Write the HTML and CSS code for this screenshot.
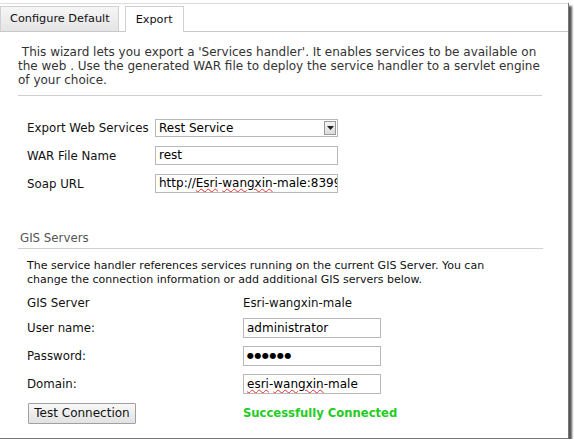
FILE: index.html
```html
<!DOCTYPE html>
<html>
<head>
<meta charset="utf-8">
<link rel="stylesheet" href="styles.css">
</head>
<body>
<div class="frame">
  <div class="tabs">
    <div class="tab">Configure Default</div>
    <div class="tab active">Export</div>
  </div>
  <p class="intro">&nbsp;This wizard lets you export a 'Services handler'. It enables services to be available on<br>the web . Use the generated WAR file to deploy the service handler to a servlet engine<br>of your choice.</p>
  <div class="form">
    <label class="lbl">Export Web Services</label>
    <div class="select"><span>Rest Service</span><span class="arrow"><svg width="7" height="4" viewBox="0 0 7 4"><path d="M0 0H7L3.5 4Z" fill="#222"/></svg></span></div>
    <label class="lbl">WAR File Name</label>
    <div class="input">rest</div>
    <label class="lbl">Soap URL</label>
    <div class="input">http://<span class="sp">Esri</span>-<span class="sp">wangxin</span>-male:8399</div>
  </div>
  <div class="heading">GIS Servers</div>
  <p class="desc">The service handler references services running on the current GIS Server. You can change the connection information or add additional GIS servers below.</p>
  <div class="gis">
    <div class="lbl">GIS Server</div>
    <div class="val">Esri-wangxin-male</div>
    <div class="lbl">User name:</div>
    <div class="input">administrator</div>
    <div class="lbl">Password:</div>
    <div class="input dots">&#9679;&#9679;&#9679;&#9679;&#9679;&#9679;</div>
    <div class="lbl">Domain:</div>
    <div class="input"><span class="sp">esri</span>-<span class="sp">wangxin</span>-male</div>
    <div class="btncell"><button class="btn">Test Connection</button></div>
    <div class="ok">Successfully Connected</div>
  </div>
</div>
</body>
</html>
```
FILE: styles.css
```css
html, body {
  margin: 0;
  padding: 0;
  background: #fff;
}
body {
  font-family: "DejaVu Sans", Verdana, sans-serif;
  font-size: 11.8px;
  color: #111;
}
.frame {
  width: 569px;
  height: 436px;
  margin-top: 3px;
  background: #fff;
  border-right: 1px solid #777;
  border-bottom: 1px solid #777;
  box-shadow: 3px 3px 2px #555;
  box-sizing: border-box;
  overflow: hidden;
}
.tabs {
  display: flex;
  align-items: flex-end;
  border-top: 1px solid #ddd;
  border-bottom: 1px solid #c8c8c8;
  height: 26px;
  padding-top: 1px;
}
.tab {
  height: 24px;
  line-height: 24px;
  padding: 0 8px 0 9px;
  border: 1px solid #d0d0d0;
  border-bottom: none;
  background: linear-gradient(#f6f6f6, #e4e4e4);
  color: #111;
  font-size: 11.3px;
  box-sizing: content-box;
}
.tab.active {
  background: #fff;
  margin-left: 6px;
  height: 25px;
  margin-bottom: -1px;
  padding: 0 10px;
  line-height: 25px;
}
.intro {
  margin: 13px 26px 0 18px;
  padding-bottom: 8px;
  border-bottom: 1px solid #d0d0d0;
  line-height: 14px;
  color: #333;
  font-size: 12px;
  white-space: nowrap;
}
.form {
  display: grid;
  grid-template-columns: 128px 183px;
  row-gap: 9px;
  margin: 23px 0 0 27px;
  align-items: center;
}
.lbl {
  color: #111;
}
.select, .input {
  height: 19px;
  border: 1px solid #b8b8b8;
  box-sizing: border-box;
  line-height: 17px;
  padding: 0 3px;
  white-space: nowrap;
  overflow: hidden;
  color: #000;
  font-size: 12px;
}
.select {
  display: flex;
  justify-content: space-between;
  align-items: center;
  height: 18px;
  padding-right: 1px;
}
.arrow {
  width: 12px;
  height: 14px;
  border: 1px solid #999;
  background: linear-gradient(#f4f4f4, #dcdcdc);
  display: flex;
  align-items: center;
  justify-content: center;
  box-sizing: border-box;
}
.sp {
  text-decoration: underline wavy #e03030;
  text-decoration-thickness: 1px;
  text-underline-offset: 1px;
}
.heading {
  margin: 38px 0 0 18px;
  padding: 0 0 3px 2px;
  border-bottom: 1px solid #d0d0d0;
  width: 523px;
  color: #555;
  line-height: 14px;
}
.desc {
  margin: 10px 60px 0 27px;
  line-height: 14px;
  color: #111;
  font-size: 11px;
}
.gis {
  display: grid;
  grid-template-columns: 216px 138px;
  grid-template-rows: 14px 20px 20px 20px 22px;
  row-gap: 8px;
  margin: 9px 0 0 27px;
  align-items: center;
}
.gis .input {
  height: 20px;
  line-height: 18px;
}
.dots {
  font-size: 8px;
  letter-spacing: 0.5px;
}
.btncell {
  padding-left: 1px;
}
.btn {
  font-family: "DejaVu Sans", Verdana, sans-serif;
  font-size: 12px;
  height: 21px;
  width: 108px;
  padding: 0;
  border: 1px solid #a0a0a0;
  background: linear-gradient(#f8f8f8, #e2e2e2);
  color: #111;
  border-radius: 1px;
}
.ok {
  color: #22cc22;
  font-weight: bold;
  font-size: 11.6px;
  white-space: nowrap;
}
```
